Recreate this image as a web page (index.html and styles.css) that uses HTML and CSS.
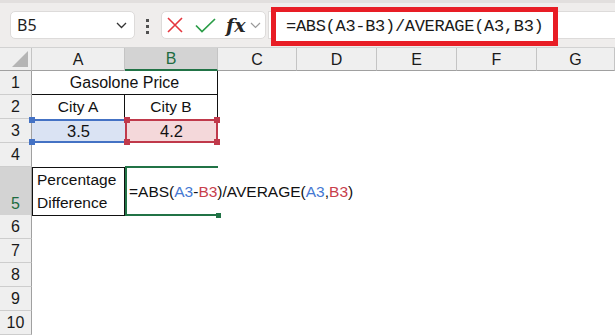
FILE: index.html
```html
<!DOCTYPE html>
<html lang="en">
<head>
    <meta charset="UTF-8">
    <meta name="viewport" content="width=device-width, initial-scale=1.0">
    <title>Percentage Difference</title>
    <link rel="stylesheet" href="styles.css">
</head>
<body>

<div class="toolbar">
    <div class="namebox">
        <span>B5</span>
        <svg class="chevron" width="11" height="7" viewBox="0 0 11 7"><polyline points="1,1 5.5,5.5 10,1" fill="none" stroke="#333" stroke-width="1.3"/></svg>
    </div>
    <div class="grip"><i></i><i></i><i></i></div>
    <div class="fx-group">
        <svg class="icon-cancel" width="16" height="16" viewBox="0 0 16 16"><path d="M1 1 L15 15 M15 1 L1 15" stroke="#e5363e" stroke-width="1.6" fill="none"/></svg>
        <svg class="icon-enter" width="21" height="15" viewBox="0 0 21 15"><polyline points="1,7.5 7,13.5 20,1" fill="none" stroke="#2a9d47" stroke-width="1.7"/></svg>
        <span class="fx">fx</span>
        <svg class="chevron small" width="11" height="7" viewBox="0 0 11 7"><polyline points="1,1 5.5,5.5 10,1" fill="none" stroke="#9a9a9a" stroke-width="1.2"/></svg>
    </div>
    <div class="formula-bar">
        <span class="formula-input">=ABS(A3-B3)/AVERAGE(A3,B3)</span>
    </div>
</div>

<div class="sheet">
    <div class="row col-headers">
        <div class="corner"><span class="corner-tri"></span></div>
        <div class="col-hdr">A</div>
        <div class="col-hdr active">B</div>
        <div class="col-hdr">C</div>
        <div class="col-hdr">D</div>
        <div class="col-hdr">E</div>
        <div class="col-hdr">F</div>
        <div class="col-hdr">G</div>
    </div>

    <div class="row">
        <div class="row-hdr">1</div>
        <div class="cell merged title">Gasolone Price</div>
    </div>
    <div class="row">
        <div class="row-hdr">2</div>
        <div class="cell center boxed-r">City A</div>
        <div class="cell center boxed-r">City B</div>
    </div>
    <div class="row">
        <div class="row-hdr">3</div>
        <div class="cell center ref-a">3.5
            <span class="handle blue tl"></span>
            <span class="handle blue bl"></span>
        </div>
        <div class="cell center ref-b">4.2
            <span class="handle red tl"></span>
            <span class="handle red tr"></span>
            <span class="handle red bl"></span>
            <span class="handle red br"></span>
        </div>
    </div>
    <div class="row">
        <div class="row-hdr">4</div>
    </div>
    <div class="row tall">
        <div class="row-hdr active">5</div>
        <div class="cell label">Percentage<br>Difference</div>
        <div class="cell selected">=ABS(<span class="ref-blue">A3</span>-<span class="ref-red">B3</span>)/AVERAGE(<span class="ref-blue">A3</span>,<span class="ref-red">B3</span>)
            <span class="fill-handle"></span>
        </div>
    </div>
    <div class="row"><div class="row-hdr">6</div></div>
    <div class="row"><div class="row-hdr">7</div></div>
    <div class="row"><div class="row-hdr">8</div></div>
    <div class="row"><div class="row-hdr">9</div></div>
    <div class="row"><div class="row-hdr">10</div></div>
</div>

</body>
</html>
```

FILE: styles.css
```css
* {
    box-sizing: border-box;
}

body {
    margin: 0;
    width: 615px;
    height: 335px;
    overflow: hidden;
    background-color: #fff;
    font-family: "Liberation Sans", Arial, sans-serif;
    color: #111;
}

/* ---- formula toolbar ---- */

.toolbar {
    display: flex;
    align-items: flex-start;
    height: 48px;
    padding: 8px 0 0 10px;
    background-color: #efedec;
    border-top: 3px solid #e2dfde;
    border-bottom: 1px solid #d2d2d2;
}

.namebox {
    display: flex;
    align-items: center;
    justify-content: space-between;
    width: 125px;
    height: 28px;
    padding: 0 7px 0 6px;
    background-color: #fff;
    border: 1px solid #dddbda;
    border-radius: 5px;
    font-family: "Noto Sans", sans-serif;
    font-size: 16px;
    color: #1e1e1e;
}

.grip {
    display: flex;
    flex-direction: column;
    gap: 3px;
    margin: 8px 12px 0 11px;
}

.grip i {
    display: block;
    width: 3px;
    height: 3px;
    background-color: #505050;
}

.fx-group {
    display: flex;
    align-items: center;
    width: 105px;
    height: 28px;
    padding-left: 5px;
    background-color: #fff;
    border: 1px solid #dddbda;
    border-radius: 5px;
}

.icon-cancel {
    margin-right: 12px;
}

.icon-enter {
    margin-right: 10px;
}

.fx {
    font-family: "DejaVu Serif", serif;
    font-style: italic;
    font-weight: bold;
    font-size: 19px;
    color: #262626;
    margin-right: 4px;
    line-height: 1;
}

.formula-bar {
    flex: 1;
    height: 28px;
    margin-left: 2px;
    background-color: #fff;
    border: 1px solid #dddbda;
    border-right: none;
}

.formula-input {
    display: block;
    width: 287px;
    height: 39px;
    margin: -5px 0 0 2px;
    padding-left: 10px;
    border: 5px solid #e81d25;
    background-color: #fff;
    font-family: "Liberation Mono", monospace;
    font-size: 17px;
    letter-spacing: -0.3px;
    line-height: 30px;
    color: #1a1a1a;
    white-space: nowrap;
}

/* ---- sheet grid ---- */

.row {
    display: grid;
    grid-template-columns: 32px 93px 93px 79px 80px 80px 80px 1fr;
    height: 24px;
}

.row.tall {
    height: 48px;
}

.col-headers {
    height: 23px;
}

.corner {
    position: relative;
    background-color: #efefef;
    border-right: 1px solid #c4c4c4;
    border-bottom: 1px solid #a0a0a0;
}

.corner-tri {
    position: absolute;
    right: 3px;
    bottom: 3px;
    width: 0;
    height: 0;
    border-left: 16px solid transparent;
    border-bottom: 16px solid #b5b5b5;
}

.col-hdr {
    display: flex;
    align-items: center;
    justify-content: center;
    padding-top: 1px;
    background-color: #efefef;
    border-right: 1px solid #c4c4c4;
    border-bottom: 1px solid #a0a0a0;
    font-size: 16px;
    color: #1a1a1a;
}

.col-hdr.active {
    background-color: #d3d3d3;
    border-bottom: 2px solid #217346;
    color: #1d6b40;
}

.row-hdr {
    display: flex;
    align-items: center;
    justify-content: center;
    background-color: #efefef;
    border-right: 1px solid #a0a0a0;
    border-bottom: 1px solid #cdcdcd;
    font-size: 16px;
    color: #1a1a1a;
}

.row-hdr.active {
    align-items: flex-end;
    padding-bottom: 2px;
    background-color: #d3d3d3;
    color: #1d6b40;
}

.cell {
    position: relative;
    font-size: 15.5px;
    line-height: 23px;
    white-space: nowrap;
}

.center {
    text-align: center;
}

.merged {
    grid-column: span 2;
    text-align: center;
    border-right: 1px solid #111;
    border-bottom: 1px solid #111;
    font-size: 16px;
}

.boxed-r {
    border-right: 1px solid #111;
}

.ref-a {
    background-color: #dae3f3;
    border-top: 2px solid #4472c4;
    border-bottom: 2px solid #4472c4;
    font-size: 16.5px;
    line-height: 20px;
}

.ref-b {
    background-color: #f4d8da;
    border: 2px solid #c0394b;
    font-size: 16.5px;
    line-height: 20px;
}

.handle {
    position: absolute;
    width: 6px;
    height: 6px;
}

.handle.blue { background-color: #4472c4; }
.handle.red { background-color: #c0394b; }

.handle.tl { top: -4px; left: -3px; }
.handle.tr { top: -4px; right: -4px; }
.handle.bl { bottom: -4px; left: -3px; }
.handle.br { bottom: -4px; right: -4px; }

.label {
    padding-left: 4px;
    border: 1px solid #111;
    white-space: normal;
}

.selected {
    display: flex;
    align-items: center;
    margin-top: -1px;
    height: 50px;
    padding-left: 2px;
    border-top: 2px solid #217346;
    border-left: 2px solid #217346;
    border-bottom: 2px solid #217346;
    overflow: visible;
}

.ref-blue { color: #4578d2; }
.ref-red { color: #c8404b; }

.fill-handle {
    position: absolute;
    right: -3px;
    bottom: -4px;
    width: 5px;
    height: 5px;
    background-color: #217346;
}
```
